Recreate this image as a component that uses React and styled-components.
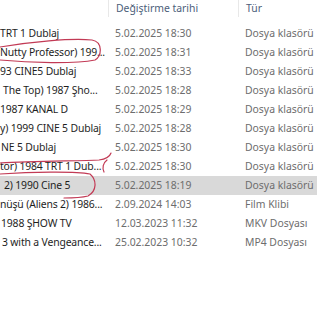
import styled, { createGlobalStyle } from "styled-components";

const GlobalStyle = createGlobalStyle`
  html, body {
    margin: 0;
    background: #ffffff;
  }
  body {
    font-family: "Noto Sans", "Open Sans", sans-serif;
    font-size: 10.4px;
  }
`;

const files = [
  { name: "TRT 1 Dublaj", date: "5.02.2025 18:30", type: "Dosya klasörü" },
  { name: "Nutty Professor) 199...", date: "5.02.2025 18:31", type: "Dosya klasörü" },
  { name: "93 CINE5 Dublaj", date: "5.02.2025 18:33", type: "Dosya klasörü" },
  { name: "The Top) 1987 Şho...", date: "5.02.2025 18:28", type: "Dosya klasörü", indent: 3 },
  { name: "1987 KANAL D", date: "5.02.2025 18:29", type: "Dosya klasörü" },
  { name: "y) 1999 CINE 5 Dublaj", date: "5.02.2025 18:28", type: "Dosya klasörü" },
  { name: "NE 5 Dublaj", date: "5.02.2025 18:30", type: "Dosya klasörü", indent: 1 },
  { name: "tor) 1984 TRT 1 Dub...", date: "5.02.2025 18:30", type: "Dosya klasörü" },
  { name: "2) 1990 Cine 5", date: "5.02.2025 18:19", type: "Dosya klasörü", selected: true, indent: 4 },
  { name: "nüşü (Aliens 2) 1986...", date: "2.09.2024 14:03", type: "Film Klibi" },
  { name: "1988 ŞHOW TV", date: "12.03.2023 11:32", type: "MKV Dosyası", indent: 1 },
  { name: "3 with a Vengeance...", date: "25.02.2023 10:32", type: "MP4 Dosyası", indent: 2 },
];

const Page = styled.div`
  position: relative;
  width: 320px;
  height: 320px;
  overflow: hidden;
  background: #fff;
`;

const Header = styled.div`
  display: grid;
  grid-template-columns: 108px 130px 1fr;
  height: 17px;
  margin-bottom: 7px;
`;

const HeaderCell = styled.div`
  padding-left: 7px;
  line-height: 17px;
  color: #4c607a;
  border-left: ${(p) => (p.$first ? "none" : "1px solid #e8e8e8")};
`;

const List = styled.div`
  display: flex;
  flex-direction: column;
`;

const Row = styled.div`
  display: grid;
  grid-template-columns: 108px 130px 1fr;
  height: 19px;
  line-height: 19px;
  margin-right: 3px;
  background: ${(p) => (p.$selected ? "#d9d9d9" : "transparent")};
`;

const NameCell = styled.div`
  color: #1e1e1e;
  white-space: nowrap;
  overflow: hidden;
  padding-right: 2px;
  letter-spacing: -0.15px;
`;

const Cell = styled.div`
  color: #6d6d6d;
  padding-left: 7px;
  white-space: nowrap;
  overflow: hidden;
`;

const Marks = styled.svg`
  position: absolute;
  left: 0;
  top: 0;
  pointer-events: none;
`;

function Annotations() {
  return (
    <Marks width="320" height="320" viewBox="0 0 320 320" fill="none">
      <g stroke="#c23a55" strokeWidth="1.2" strokeLinecap="round">
        <path d="M0 47 C 30 42, 70 38, 92 40 C 103 42, 102 56, 95 60 C 75 64, 30 63, 0 60" />
        <path d="M0 163 C 35 161, 80 161, 99 160 C 106 159, 110 156, 111 153" />
        <path d="M107 160 C 103 163, 102 168, 104 172" />
        <path d="M0 174 C 30 172, 75 171, 90 174 C 97 180, 97 191, 88 196 C 80 198, 72 198, 64 198" />
      </g>
    </Marks>
  );
}

export default function App() {
  return (
    <Page>
      <GlobalStyle />
      <Header>
        <HeaderCell $first />
        <HeaderCell>Değiştirme tarihi</HeaderCell>
        <HeaderCell>Tür</HeaderCell>
      </Header>
      <List>
        {files.map((f, i) => (
          <Row key={i} $selected={f.selected}>
            <NameCell style={f.indent ? { textIndent: f.indent } : undefined}>
              {f.name}
            </NameCell>
            <Cell>{f.date}</Cell>
            <Cell>{f.type}</Cell>
          </Row>
        ))}
      </List>
      <Annotations />
    </Page>
  );
}
